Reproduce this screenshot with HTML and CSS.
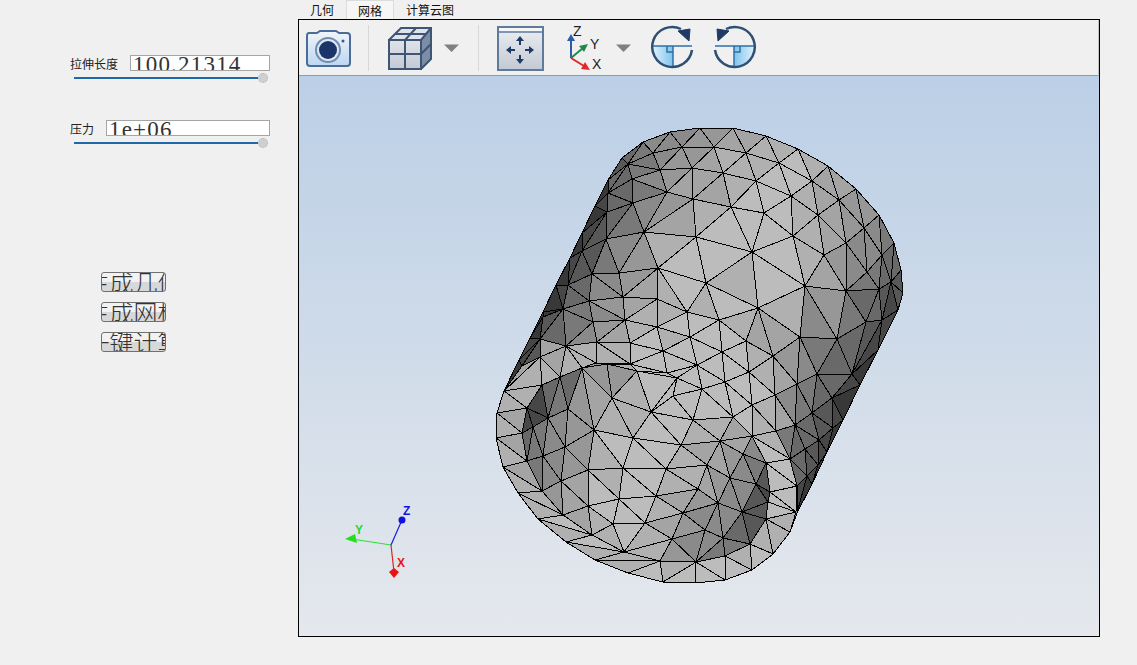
FILE: index.html
```html
<!DOCTYPE html>
<html lang="zh-CN">
  <head>
    <meta charset="UTF-8" />
    <title>网格</title>
    <link rel="stylesheet" href="styles.css">
  </head>
  <body>
    <div class="side">
      <div class="row row-len">
        <span class="label">拉伸长度</span>
        <div class="field">100.21314</div>
      </div>
      <div class="slider"><div class="track"></div><div class="knob"></div></div>

      <div class="row row-press">
        <span class="label">压力</span>
        <div class="field">1e+06</div>
      </div>
      <div class="slider"><div class="track"></div><div class="knob"></div></div>

      <div class="btns">
        <div class="btn"><span>生成几何</span></div>
        <div class="btn"><span>生成网格</span></div>
        <div class="btn"><span>一键计算</span></div>
      </div>
    </div>

    <div class="main">
      <ul class="tabs">
        <li>几何</li>
        <li class="active">网格</li>
        <li>计算云图</li>
      </ul>
      <div class="panel">
        <div class="toolbar">
          <!-- 截图 -->
          <svg class="ico cam" viewBox="306 24 46 48">
            <defs>
              <linearGradient id="camFill" x1="0" y1="0" x2="0" y2="1">
                <stop offset="0" stop-color="#f2f5f9" />
                <stop offset="1" stop-color="#bcd6f0" />
              </linearGradient>
              <linearGradient id="cubeFill" x1="0" y1="0" x2="0" y2="1">
                <stop offset="0" stop-color="#eceef2" />
                <stop offset="1" stop-color="#c3c9d3" />
              </linearGradient>
              <linearGradient id="pieFill" x1="0" y1="0" x2="1" y2="0">
                <stop offset="0" stop-color="#e4f2fb" />
                <stop offset="1" stop-color="#7fc4ec" />
              </linearGradient>
            </defs>
            <path d="M309 33H317L320 31H336L339 33H347Q350 33 350 36V63Q350 66 347 66H310Q307 66 307 63V36Q307 33 309 33Z" fill="url(#camFill)" stroke="#4a6c98" stroke-width="2" />
            <circle cx="328" cy="50" r="12" fill="#dfe8f2" stroke="#6f8db0" stroke-width="2" />
            <circle cx="328" cy="50" r="9" fill="#1b3568" />
            <circle cx="343" cy="41" r="1.5" fill="#3a5a88" />
          </svg>
          <div class="sep"></div>
          <!-- 网格显示 -->
          <svg class="ico cube" viewBox="388 24 45 48">
            <path d="M389 40L401 28H431V59L421 69H389Z" fill="url(#cubeFill)" />
            <path d="M421 40L431 28V59L421 69Z" fill="#7c8da6" />
            <path d="M389 40L401 28H431L421 40Z" fill="#dfe3ea" />
            <path d="M389 40H421V69H389ZM421 40L431 28M389 40L401 28H431V59L421 69M405 40V69M389 54H421M421 54L431 44M405 40L416 28M395 34H426" fill="none" stroke="#3f5575" stroke-width="2" />
          </svg>
          <svg class="ico drop" viewBox="0 0 15 48"><path d="M0 20.5H15L7.5 28Z" /></svg>
          <div class="sep sep2"></div>
          <!-- 适应窗口 -->
          <svg class="ico fit" viewBox="497 24 47 48">
            <rect x="498" y="27" width="45" height="43" fill="url(#cubeFill)" stroke="#5f7b9c" stroke-width="2" />
            <path d="M499 32H542" stroke="#5f7b9c" stroke-width="1.5" />
            <rect x="499" y="28" width="43" height="3" fill="#f5f6f8" />
            <path d="M520 40V45M520 55V60M510 50H515M525 50H530" stroke="#1f3a66" stroke-width="2" />
            <path d="M520 36L516 41H524ZM520 64L516 59H524ZM506 50L511 46V54ZM534 50L529 46V54Z" fill="#1f3a66" />
          </svg>
          <!-- 视角 -->
          <svg class="ico axes" viewBox="565 24 42 48">
            <path d="M571 58V38" stroke="#2a5ca8" stroke-width="2" />
            <path d="M571 34L567 41H575Z" fill="#2a5ca8" />
            <path d="M571 58L583 48" stroke="#1e8a4a" stroke-width="2" />
            <path d="M588 44L584 52L579 46Z" fill="#1e8a4a" />
            <path d="M571 58L584 66" stroke="#dd2a2a" stroke-width="2" />
            <path d="M590 70L581 69L585 62Z" fill="#dd2a2a" />
            <text x="573" y="36">Z</text>
            <text x="590" y="49">Y</text>
            <text x="592" y="69">X</text>
          </svg>
          <svg class="ico drop drop2" viewBox="0 0 15 48"><path d="M0 20.5H15L7.5 28Z" /></svg>
          <!-- 旋转 -->
          <svg class="ico rot" viewBox="650 24 44 48">
            <path d="M652 46H673V67A20 20 0 0 1 652 46Z" fill="url(#pieFill)" />
            <path d="M652 46H692M673 46V67M667 46V52H673" fill="none" stroke="#2f6fa8" stroke-width="1.5" />
            <path d="M692 50A20 20 0 1 1 681 29" fill="none" stroke="#2f4f75" stroke-width="2.5" />
            <path d="M690 29L689 41L678 31Z" fill="#1f3a66" stroke="#1f3a66" />
          </svg>
          <svg class="ico rot flip" viewBox="650 24 44 48">
            <path d="M652 46H673V67A20 20 0 0 1 652 46Z" fill="url(#pieFill)" />
            <path d="M652 46H692M673 46V67M667 46V52H673" fill="none" stroke="#2f6fa8" stroke-width="1.5" />
            <path d="M692 50A20 20 0 1 1 681 29" fill="none" stroke="#2f4f75" stroke-width="2.5" />
            <path d="M690 29L689 41L678 31Z" fill="#1f3a66" stroke="#1f3a66" />
          </svg>
        </div>

        <div class="view">
          <svg class="mesh" viewBox="299 76 800 560">
            <!-- 底色,防止三角形之间漏缝 -->
            <polygon class="t4" points="608,180 622,158 643,142 670,132 700,128 733,128 766,136 798,149 828,166 856,189 879,215 894,243 901,270 903,293 898,310 878,350 860,385 843,420 827,452 812,484 797,513 790,532 773,554 752,570 725,580 695,583 663,582 628,573 595,560 566,542 538,519 518,493 503,467 496,438 497,413 504,391 519,360 530,338 543,312 556,285 570,258 582,233 595,206" />

            <!-- 圆柱外表面 -->
            <polygon class="t5" points="643,142 670,132 653,153" />
            <polygon class="t5" points="670,132 682,147 653,153" />
            <polygon class="t5" points="670,132 700,128 682,147" />
            <polygon class="t7" points="622,158 643,142 628,164" />
            <polygon class="t6" points="643,142 653,153 628,164" />
            <polygon class="t6" points="628,164 653,153 660,170" />
            <polygon class="t6" points="628,164 660,170 632,179" />
            <polygon class="t5" points="653,153 682,147 660,170" />
            <polygon class="t4" points="682,147 692,168 660,170" />
            <polygon class="t4" points="682,147 714,147 692,168" />
            <polygon class="t4" points="682,147 700,128 714,147" />
            <polygon class="t4" points="700,128 733,128 714,147" />
            <polygon class="t8" points="608,180 622,158 628,164" />
            <polygon class="t7" points="608,180 628,164 608,193" />
            <polygon class="t7" points="628,164 632,179 608,193" />
            <polygon class="t7" points="608,193 632,179 633,203" />
            <polygon class="t5" points="632,179 660,170 667,192" />
            <polygon class="t6" points="632,179 667,192 633,203" />
            <polygon class="t7" points="608,193 633,203 607,212" />
            <polygon class="t7" points="607,212 633,203 606,239" />
            <polygon class="t6" points="633,203 644,232 606,239" />
            <polygon class="t5" points="633,203 667,192 644,232" />
            <polygon class="t4" points="667,192 693,199 644,232" />
            <polygon class="t4" points="660,170 692,168 667,192" />
            <polygon class="t3" points="692,168 693,199 667,192" />
            <polygon class="t3" points="692,168 723,173 693,199" />
            <polygon class="t3" points="723,173 731,207 693,199" />
            <polygon class="t3" points="714,147 723,173 692,168" />
            <polygon class="t2" points="714,147 746,153 723,173" />
            <polygon class="t10" points="608,180 608,193 595,206" />
            <polygon class="t9" points="608,193 607,212 595,206" />
            <polygon class="t10" points="595,206 607,212 582,233" />
            <polygon class="t8" points="607,212 606,239 582,251" />
            <polygon class="t9" points="607,212 582,251 582,233" />
            <polygon class="t10" points="582,233 582,251 570,258" />
            <polygon class="t8" points="606,239 592,274 582,251" />
            <polygon class="t6" points="606,239 619,273 592,274" />
            <polygon class="t5" points="606,239 644,232 619,273" />
            <polygon class="t4" points="644,232 658,268 619,273" />
            <polygon class="t2" points="644,232 696,237 658,268" />
            <polygon class="t3" points="644,232 693,199 696,237" />
            <polygon class="t8" points="582,251 592,274 568,285" />
            <polygon class="t9" points="582,251 568,285 570,258" />
            <polygon class="t10" points="570,258 568,285 556,285" />
            <polygon class="t7" points="568,285 592,274 589,301" />
            <polygon class="t5" points="592,274 623,297 589,301" />
            <polygon class="t5" points="592,274 619,273 623,297" />
            <polygon class="t4" points="619,273 658,268 623,297" />
            <polygon class="t3" points="658,268 657,299 623,297" />
            <polygon class="t1" points="658,268 706,283 687,312" />
            <polygon class="t1" points="658,268 696,237 706,283" />
            <polygon class="t2" points="658,268 687,312 657,299" />
            <polygon class="t7" points="568,285 589,301 563,309" />
            <polygon class="t9" points="556,285 568,285 563,309" />
            <polygon class="t10" points="556,285 563,309 543,312" />
            <polygon class="t10" points="563,309 543,317 543,312" />
            <polygon class="t6" points="563,309 589,301 593,322" />
            <polygon class="t6" points="563,309 593,322 566,346" />
            <polygon class="t5" points="593,322 597,342 566,346" />
            <polygon class="t5" points="589,301 625,320 593,322" />
            <polygon class="t4" points="589,301 623,297 625,320" />
            <polygon class="t3" points="623,297 657,299 625,320" />
            <polygon class="t2" points="657,299 657,327 625,320" />
            <polygon class="t2" points="657,299 687,312 657,327" />
            <polygon class="t2" points="625,320 657,327 630,343" />
            <polygon class="t3" points="625,320 630,343 597,342" />
            <polygon class="t4" points="593,322 625,320 597,342" />
            <polygon class="t1" points="657,327 663,351 630,343" />
            <polygon class="t2" points="657,327 690,337 663,351" />
            <polygon class="t1" points="657,327 687,312 690,337" />
            <polygon class="t8" points="543,317 563,309 540,339" />
            <polygon class="t7" points="563,309 566,346 540,339" />
            <polygon class="t10" points="543,317 540,339 530,338" />
            <polygon class="t10" points="543,312 543,317 530,338" />
            <polygon class="t9" points="530,338 540,339 519,360" />

            <polygon class="t3" points="733,128 766,136 746,153" />
            <polygon class="t3" points="733,128 746,153 714,147" />
            <polygon class="t2" points="766,136 779,163 746,153" />
            <polygon class="t2" points="766,136 798,149 779,163" />
            <polygon class="t1" points="798,149 812,181 779,163" />
            <polygon class="t2" points="798,149 828,166 812,181" />
            <polygon class="t3" points="828,166 839,200 812,181" />
            <polygon class="t3" points="828,166 856,189 839,200" />
            <polygon class="t4" points="856,189 864,228 839,200" />
            <polygon class="t4" points="856,189 879,215 864,228" />
            <polygon class="t5" points="879,215 882,255 864,228" />
            <polygon class="t6" points="879,215 894,243 882,255" />
            <polygon class="t7" points="894,243 891,282 882,255" />
            <polygon class="t7" points="894,243 901,270 891,282" />
            <polygon class="t8" points="901,270 903,293 891,282" />
            <polygon class="t2" points="746,153 756,181 723,173" />
            <polygon class="t2" points="746,153 779,163 756,181" />
            <polygon class="t1" points="779,163 791,196 756,181" />
            <polygon class="t1" points="779,163 812,181 791,196" />
            <polygon class="t2" points="812,181 818,215 791,196" />
            <polygon class="t3" points="812,181 839,200 818,215" />
            <polygon class="t3" points="839,200 846,243 818,215" />
            <polygon class="t4" points="839,200 864,228 846,243" />
            <polygon class="t5" points="864,228 867,272 846,243" />
            <polygon class="t5" points="864,228 882,255 867,272" />
            <polygon class="t6" points="882,255 879,289 867,272" />
            <polygon class="t7" points="882,255 891,282 879,289" />
            <polygon class="t2" points="723,173 756,181 731,207" />
            <polygon class="t1" points="756,181 764,213 731,207" />
            <polygon class="t1" points="756,181 791,196 764,213" />
            <polygon class="t1" points="791,196 793,236 764,213" />
            <polygon class="t2" points="791,196 818,215 793,236" />
            <polygon class="t2" points="818,215 824,255 793,236" />
            <polygon class="t3" points="818,215 846,243 824,255" />
            <polygon class="t4" points="846,243 846,291 824,255" />
            <polygon class="t5" points="846,243 867,272 846,291" />
            <polygon class="t6" points="867,272 879,289 846,291" />
            <polygon class="t2" points="693,199 731,207 696,237" />
            <polygon class="t1" points="731,207 752,252 696,237" />
            <polygon class="t1" points="731,207 764,213 752,252" />
            <polygon class="t1" points="764,213 793,236 752,252" />
            <polygon class="t1" points="793,236 805,286 752,252" />
            <polygon class="t2" points="793,236 824,255 805,286" />
            <polygon class="t3" points="824,255 846,291 805,286" />
            <polygon class="t1" points="696,237 752,252 706,283" />
            <polygon class="t2" points="752,252 758,308 706,283" />
            <polygon class="t1" points="752,252 805,286 758,308" />
            <polygon class="t2" points="805,286 800,337 758,308" />
            <polygon class="t5" points="805,286 837,339 800,337" />
            <polygon class="t4" points="805,286 846,291 837,339" />
            <polygon class="t6" points="846,291 866,322 837,339" />
            <polygon class="t7" points="846,291 879,289 866,322" />
            <polygon class="t7" points="879,289 882,320 866,322" />
            <polygon class="t8" points="879,289 891,282 882,320" />
            <polygon class="t8" points="891,282 903,293 898,310" />
            <polygon class="t9" points="891,282 898,310 882,320" />
            <polygon class="t1" points="706,283 758,308 719,320" />
            <polygon class="t2" points="706,283 719,320 687,312" />
            <polygon class="t1" points="687,312 719,320 690,337" />
            <polygon class="t2" points="758,308 746,341 719,320" />
            <polygon class="t3" points="758,308 773,356 746,341" />
            <polygon class="t3" points="758,308 800,337 773,356" />
            <polygon class="t1" points="719,320 746,341 722,352" />
            <polygon class="t1" points="719,320 722,352 690,337" />

            <polygon class="t4" points="773,356 800,337 797,384" />
            <polygon class="t5" points="800,337 817,374 797,384" />
            <polygon class="t6" points="800,337 837,339 817,374" />
            <polygon class="t7" points="837,339 852,374 817,374" />
            <polygon class="t7" points="837,339 866,322 852,374" />
            <polygon class="t8" points="866,322 882,320 852,374" />
            <polygon class="t9" points="882,320 898,310 878,350" />
            <polygon class="t9" points="882,320 878,350 852,374" />
            <polygon class="t10" points="852,374 878,350 860,385" />
            <polygon class="t9" points="852,374 860,385 832,398" />
            <polygon class="t7" points="817,374 852,374 832,398" />
            <polygon class="t7" points="817,374 832,398 812,413" />
            <polygon class="t6" points="797,384 817,374 812,413" />
            <polygon class="t6" points="797,384 812,413 795,425" />
            <polygon class="t10" points="832,398 860,385 843,420" />
            <polygon class="t9" points="832,398 843,420 833,428" />
            <polygon class="t8" points="812,413 832,398 833,428" />
            <polygon class="t8" points="812,413 833,428 819,440" />
            <polygon class="t7" points="795,425 812,413 819,440" />
            <polygon class="t7" points="795,425 819,440 805,449" />
            <polygon class="t10" points="833,428 843,420 827,452" />
            <polygon class="t9" points="833,428 827,452 819,440" />
            <polygon class="t9" points="819,440 827,452 818,465" />
            <polygon class="t8" points="805,449 819,440 818,465" />
            <polygon class="t8" points="805,449 818,465 807,476" />
            <polygon class="t10" points="818,465 827,452 812,484" />
            <polygon class="t9" points="818,465 812,484 807,476" />
            <polygon class="t10" points="807,476 812,484 797,513" />
            <polygon class="t9" points="797,486 807,476 797,513" />
            <polygon class="t7" points="790,459 805,449 807,476" />
            <polygon class="t7" points="790,459 807,476 797,486" />
            <polygon class="t7" points="795,425 805,449 790,459" />
            <polygon class="t6" points="776,431 795,425 790,459" />
            <polygon class="t5" points="775,395 797,384 795,425" />
            <polygon class="t3" points="775,395 795,425 776,431" />
            <polygon class="t3" points="773,356 797,384 775,395" />
            <polygon class="t2" points="749,372 773,356 775,395" />
            <polygon class="t2" points="746,341 773,356 749,372" />
            <polygon class="t1" points="722,352 746,341 749,372" />
            <polygon class="t1" points="722,352 749,372 725,382" />
            <polygon class="t1" points="690,337 722,352 697,365" />
            <polygon class="t1" points="722,352 725,382 697,365" />
            <polygon class="t1" points="749,372 775,395 752,405" />
            <polygon class="t1" points="725,382 749,372 752,405" />
            <polygon class="t1" points="725,382 752,405 733,417" />
            <polygon class="t2" points="752,405 775,395 776,431" />
            <polygon class="t2" points="752,405 776,431 752,436" />
            <polygon class="t1" points="733,417 752,405 752,436" />

            <!-- 前端面,上方和右侧 -->
            <polygon class="t2" points="752,436 776,431 790,459" />
            <polygon class="t1" points="752,436 790,459 766,463" />
            <polygon class="t1" points="766,463 790,459 797,486" />
            <polygon class="t1" points="766,463 797,486 770,492" />
            <polygon class="t1" points="770,492 797,486 796,512" />
            <polygon class="t1" points="768,502 770,492 796,512" />
            <polygon class="t1" points="766,519 768,502 796,512" />
            <polygon class="t2" points="766,519 796,512 790,532" />
            <polygon class="t2" points="766,519 790,532 773,554" />
            <polygon class="t2" points="750,544 766,519 773,554" />
            <polygon class="t1" points="750,544 773,554 752,570" />
            <polygon class="t2" points="725,556 750,544 752,570" />
            <polygon class="t1" points="725,556 752,570 725,580" />
            <polygon class="t1" points="696,562 725,556 725,580" />
            <polygon class="t1" points="696,562 725,580 695,583" />

            <polygon class="t3" points="540,339 566,346 540,357" />
            <polygon class="t9" points="519,360 540,339 522,366" />
            <polygon class="t8" points="522,366 540,339 540,357" />
            <polygon class="t10" points="504,391 519,360 522,366" />
            <polygon class="t3" points="522,366 540,357 504,391" />
            <polygon class="t2" points="504,391 540,357 542,385" />
            <polygon class="t3" points="540,357 566,346 560,377" />
            <polygon class="t2" points="540,357 560,377 542,385" />
            <polygon class="t2" points="566,346 596,363 582,368" />
            <polygon class="t2" points="566,346 597,342 596,363" />
            <polygon class="t2" points="566,346 582,368 560,377" />
            <polygon class="t2" points="597,342 630,343 630,364" />
            <polygon class="t2" points="597,342 630,364 596,363" />
            <polygon class="t1" points="630,343 663,351 630,364" />
            <polygon class="t1" points="663,351 667,373 630,364" />
            <polygon class="t1" points="663,351 697,365 667,373" />
            <polygon class="t1" points="663,351 690,337 697,365" />
            <polygon class="t1" points="630,364 667,373 637,371" />

            <!-- 孔底 -->
            <polygon class="t4" points="596,363 607,364 582,368" />
            <polygon class="t2" points="596,363 630,364 607,364" />
            <polygon class="t2" points="607,364 630,364 637,371" />
            <polygon class="t4" points="607,364 637,371 612,398" />
            <polygon class="t2" points="637,371 612,398 651,412" />
            <polygon class="t1" points="637,371 677,378 651,412" />
            <polygon class="t1" points="637,371 667,373 677,378" />
            <polygon class="t1" points="677,378 673,396 651,412" />
            <polygon class="t1" points="667,373 697,365 677,378" />
            <polygon class="t1" points="697,365 702,389 677,378" />
            <polygon class="t1" points="677,378 702,389 673,396" />
            <polygon class="t1" points="673,396 702,389 693,420" />
            <polygon class="t1" points="702,389 733,417 693,420" />
            <polygon class="t1" points="702,389 725,382 733,417" />
            <polygon class="t1" points="725,382 697,365 702,389" />

            <!-- 前端面,左下环 -->
            <polygon class="t2" points="504,391 542,385 527,408" />
            <polygon class="t2" points="504,391 527,408 497,413" />
            <polygon class="t3" points="497,413 527,408 522,433" />
            <polygon class="t2" points="497,413 522,433 496,438" />
            <polygon class="t3" points="496,438 522,433 527,461" />
            <polygon class="t2" points="496,438 527,461 503,467" />
            <polygon class="t3" points="503,467 527,461 542,491" />
            <polygon class="t2" points="503,467 542,491 518,493" />
            <polygon class="t2" points="518,493 542,491 563,515" />
            <polygon class="t2" points="518,493 563,515 538,519" />
            <polygon class="t1" points="538,519 563,515 592,535" />
            <polygon class="t2" points="538,519 592,535 566,542" />
            <polygon class="t1" points="566,542 592,535 624,552" />
            <polygon class="t2" points="566,542 624,552 595,560" />
            <polygon class="t2" points="595,560 624,552 660,561" />
            <polygon class="t2" points="595,560 660,561 628,573" />
            <polygon class="t1" points="628,573 660,561 663,582" />
            <polygon class="t2" points="660,561 696,562 663,582" />
            <polygon class="t1" points="663,582 696,562 695,583" />

            <!-- 孔壁 -->
            <polygon class="t9" points="542,385 548,418 527,408" />
            <polygon class="t7" points="542,385 560,377 548,418" />
            <polygon class="t6" points="560,377 568,409 548,418" />
            <polygon class="t7" points="560,377 582,368 568,409" />
            <polygon class="t9" points="527,408 548,418 533,427" />
            <polygon class="t9" points="527,408 533,427 522,433" />
            <polygon class="t6" points="548,418 543,456 533,427" />
            <polygon class="t7" points="522,433 533,427 527,461" />
            <polygon class="t6" points="533,427 543,456 527,461" />
            <polygon class="t5" points="548,418 565,447 543,456" />
            <polygon class="t5" points="548,418 568,409 565,447" />

            <polygon class="t4" points="582,368 594,430 568,409" />
            <polygon class="t4" points="582,368 607,364 612,398" />
            <polygon class="t3" points="582,368 612,398 594,430" />
            <polygon class="t4" points="568,409 594,430 565,447" />
            <polygon class="t4" points="594,430 588,470 565,447" />
            <polygon class="t4" points="565,447 588,470 561,481" />
            <polygon class="t5" points="565,447 561,481 543,456" />
            <polygon class="t5" points="543,456 561,481 542,491" />
            <polygon class="t6" points="527,461 543,456 542,491" />
            <polygon class="t4" points="542,491 561,481 563,515" />
            <polygon class="t3" points="561,481 588,506 563,515" />
            <polygon class="t3" points="561,481 588,470 588,506" />
            <polygon class="t3" points="563,515 588,506 592,535" />
            <polygon class="t2" points="588,506 613,524 592,535" />
            <polygon class="t2" points="592,535 613,524 624,552" />
            <polygon class="t1" points="613,524 645,523 624,552" />
            <polygon class="t2" points="645,523 672,539 624,552" />
            <polygon class="t2" points="624,552 672,539 660,561" />
            <polygon class="t4" points="660,561 672,539 696,562" />
            <polygon class="t5" points="672,539 705,530 696,562" />
            <polygon class="t5" points="705,530 723,538 696,562" />
            <polygon class="t6" points="696,562 723,538 725,556" />
            <polygon class="t2" points="612,398 633,438 594,430" />
            <polygon class="t2" points="612,398 651,412 633,438" />
            <polygon class="t1" points="651,412 681,445 633,438" />
            <polygon class="t1" points="651,412 693,420 681,445" />
            <polygon class="t1" points="651,412 673,396 693,420" />
            <polygon class="t2" points="693,420 720,441 681,445" />
            <polygon class="t2" points="693,420 733,417 720,441" />
            <polygon class="t3" points="733,417 752,436 720,441" />
            <polygon class="t3" points="720,441 752,436 743,454" />
            <polygon class="t1" points="594,430 633,438 623,468" />
            <polygon class="t2" points="594,430 623,468 588,470" />
            <polygon class="t1" points="633,438 666,469 623,468" />
            <polygon class="t1" points="633,438 681,445 666,469" />
            <polygon class="t2" points="681,445 707,465 666,469" />
            <polygon class="t3" points="681,445 720,441 707,465" />
            <polygon class="t4" points="720,441 743,454 730,478" />
            <polygon class="t3" points="720,441 730,478 707,465" />
            <polygon class="t5" points="752,436 766,463 743,454" />
            <polygon class="t6" points="743,454 766,463 756,484" />
            <polygon class="t5" points="743,454 756,484 730,478" />
            <polygon class="t8" points="766,463 770,492 756,484" />
            <polygon class="t5" points="730,478 756,484 742,512" />
            <polygon class="t9" points="756,484 770,492 768,502" />
            <polygon class="t8" points="756,484 768,502 742,512" />
            <polygon class="t8" points="742,512 768,502 766,519" />
            <polygon class="t8" points="742,512 766,519 750,544" />
            <polygon class="t5" points="730,478 742,512 718,503" />
            <polygon class="t4" points="707,465 730,478 718,503" />
            <polygon class="t3" points="707,465 718,503 698,489" />
            <polygon class="t2" points="666,469 707,465 698,489" />
            <polygon class="t2" points="666,469 698,489 656,496" />
            <polygon class="t1" points="623,468 666,469 656,496" />
            <polygon class="t1" points="623,468 656,496 619,499" />
            <polygon class="t2" points="588,470 623,468 619,499" />
            <polygon class="t1" points="588,470 619,499 588,506" />
            <polygon class="t1" points="588,506 619,499 613,524" />
            <polygon class="t1" points="619,499 645,523 613,524" />
            <polygon class="t1" points="619,499 656,496 645,523" />
            <polygon class="t2" points="656,496 683,513 645,523" />
            <polygon class="t3" points="656,496 698,489 683,513" />
            <polygon class="t4" points="698,489 718,503 683,513" />
            <polygon class="t3" points="645,523 683,513 672,539" />
            <polygon class="t4" points="683,513 705,530 672,539" />
            <polygon class="t5" points="683,513 718,503 705,530" />
            <polygon class="t5" points="718,503 742,512 723,538" />
            <polygon class="t5" points="718,503 723,538 705,530" />
            <polygon class="t7" points="742,512 750,544 723,538" />
            <polygon class="t6" points="723,538 750,544 725,556" />

            <!-- 坐标轴 -->
            <g class="triad">
              <path class="ax-y" d="M391 545L352 539" />
              <path class="ax-z" d="M391 545L402 520" />
              <path class="ax-x" d="M391 545L394 572" />
              <path class="tip-y" d="M345 539L355 534L357 543Z" />
              <circle class="tip-z" cx="402" cy="520" r="3.5" />
              <path class="tip-x" d="M394 578L389 572L394 568L399 572Z" />
              <text class="tip-y" x="355" y="534">Y</text>
              <text class="tip-z" x="403" y="515">Z</text>
              <text class="tip-x" x="397" y="567">X</text>
            </g>
          </svg>
        </div>
      </div>
    </div>
  </body>
</html>
```

FILE: styles.css
```css
* {
  margin: 0;
  padding: 0;
  box-sizing: border-box;
}

ul {
  list-style: none;
}

body {
  display: flex;
  height: 665px;
  overflow: hidden;
  background: #f0f0f0;
  font-family: "Liberation Sans", "Noto Sans CJK SC", sans-serif;
  color: #222;
}

/* 左侧参数栏 */
.side {
  width: 298px;
  padding: 55px 0 0 70px;
}

.row {
  display: flex;
  width: 200px;
  align-items: center;
  height: 16px;
  font-size: 12px;
}

.row-len .label {
  width: 60px;
}

.row-press {
  margin-top: 37px;
}

.row-press .label {
  width: 36px;
}

/* 输入框里的字比框高,下沿被裁掉 */
.field {
  flex: 1;
  height: 100%;
  padding-left: 2px;
  overflow: hidden;
  background: #fff;
  border: 1px solid #a5a5a5;
  font-family: "Liberation Serif", "Noto Sans CJK SC", serif;
  font-size: 23px;
  letter-spacing: 1.2px;
  line-height: 18px;
  color: #333;
  white-space: nowrap;
}

.slider {
  display: flex;
  align-items: center;
  width: 194px;
  height: 10px;
  margin: 2px 0 0 4px;
}

.track {
  flex: 1;
  height: 2px;
  background: #1f69a6;
}

.knob {
  width: 10px;
  height: 10px;
  background: #cfcfcf;
  border: 1px dotted #b8b8b8;
  border-radius: 50%;
}

.btns {
  display: flex;
  flex-direction: column;
  gap: 10px;
  margin: 124px 0 0 31px;
}

.btn {
  display: flex;
  justify-content: center;
  width: 65px;
  height: 20px;
  overflow: hidden;
  background: linear-gradient(#f2f2f2 50%, #d8d8d8 50%);
  border: 1px solid #707070;
  border-radius: 3px;
  font-family: "Noto Sans CJK SC", sans-serif;
  font-size: 24px;
  font-weight: 300;
  line-height: 18px;
  color: #333;
}

.btn span {
  flex-shrink: 0;
}

/* 右侧主区 */
.main {
  width: 802px;
}

.tabs {
  display: flex;
  height: 19px;
  font-size: 12px;
  line-height: 22px;
  color: #111;
  white-space: nowrap;
}

.tabs li {
  padding: 0 12px;
}

.tabs .active {
  background: #f6f6f6;
  border: 1px solid #dcdcdc;
  border-bottom: 0;
  padding: 0 11px;
}

.panel {
  height: 618px;
  border: 1px solid #000;
}

.toolbar {
  display: flex;
  align-items: flex-start;
  height: 56px;
  padding: 4px 0 0 7px;
  border-bottom: 1px solid #9a9a9a;
  border-right: 1px solid #c4c4c4;
}

.ico {
  display: block;
  flex-shrink: 0;
  height: 48px;
}

.cam {
  width: 46px;
}

.sep {
  width: 1px;
  height: 46px;
  margin: 1px 0 0 16px;
  background: #d8d8d8;
}

.cube {
  width: 45px;
  margin-left: 19px;
}

.drop {
  width: 15px;
  margin-left: 11px;
  fill: #808080;
}

.sep2 {
  margin-left: 19px;
}

.fit {
  width: 47px;
  margin-left: 18px;
}

.axes {
  width: 42px;
  margin-left: 21px;
  font-size: 14px;
  fill: #222;
}

.drop2 {
  margin-left: 9px;
}

.rot {
  width: 44px;
  margin-left: 19px;
}

.flip {
  transform: scaleX(-1);
}

.view {
  height: 560px;
  background: linear-gradient(#bbcfe6, #e5e8ed);
}

.mesh {
  display: block;
  width: 800px;
  height: 560px;
}

.mesh polygon {
  stroke: #000;
  stroke-width: 1;
  stroke-linejoin: bevel;
  shape-rendering: crispEdges;
}

.t1 { fill: #bcbcbc; }
.t2 { fill: #b0b0b0; }
.t3 { fill: #a4a4a4; }
.t4 { fill: #979797; }
.t5 { fill: #8a8a8a; }
.t6 { fill: #797979; }
.t7 { fill: #696969; }
.t8 { fill: #585858; }
.t9 { fill: #474747; }
.t10 { fill: #383838; }

.triad path[class^="ax"] {
  fill: none;
  stroke-width: 1.2;
}

.triad text {
  font-size: 12px;
  font-weight: bold;
}

.ax-x { stroke: #e02020; }
.ax-y { stroke: #33dd33; }
.ax-z { stroke: #1a1ae0; }
.tip-x { fill: #ee1111; }
.tip-y { fill: #22dd22; }
.tip-z { fill: #1111dd; }
```
